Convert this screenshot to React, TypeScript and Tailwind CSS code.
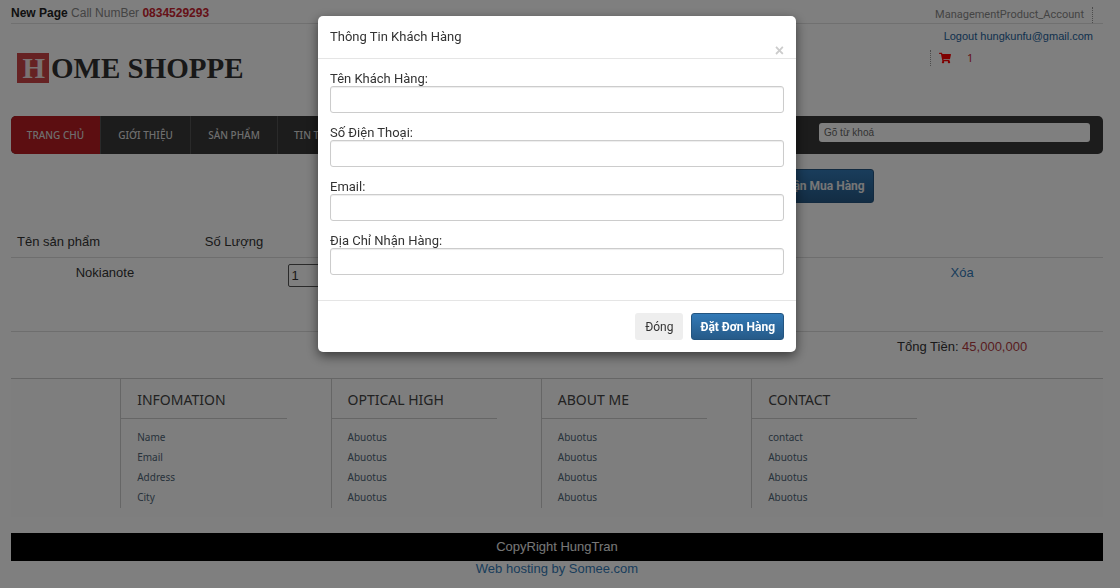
import { FaShoppingCart } from "react-icons/fa";

const navItems = [
  { label: "TRANG CHỦ", className: "w-[89px] bg-[#b81d22]" },
  { label: "GIỚI THIỆU", className: "w-[89px]" },
  { label: "SẢN PHẨM", className: "w-[86px]" },
  { label: "TIN TỨC", className: "px-4" },
];

const footerColumns = [
  { title: "INFOMATION", links: ["Name", "Email", "Address", "City"] },
  { title: "OPTICAL HIGH", links: ["Abuotus", "Abuotus", "Abuotus", "Abuotus"] },
  { title: "ABOUT ME", links: ["Abuotus", "Abuotus", "Abuotus", "Abuotus"] },
  { title: "CONTACT", links: ["contact", "Abuotus", "Abuotus", "Abuotus"] },
];

const fields = [
  { id: "name", label: "Tên Khách Hàng:", type: "text" },
  { id: "phone", label: "Số Điện Thoại:", type: "tel" },
  { id: "email", label: "Email:", type: "email" },
  { id: "address", label: "Địa Chỉ Nhận Hàng:", type: "text" },
];

function TopBar() {
  return (
    <div className="flex h-6 items-start justify-between border-b border-[#e0e0e0]">
      <p className="pt-1 text-[12px] leading-[18px] text-[#888]">
        <span className="font-bold text-[#222]">New Page</span> Call NumBer{" "}
        <span className="font-bold text-[#cb2431]">0834529293</span>
      </p>
      <a
        href="#account"
        className="mt-[7px] mr-[10px] border-r border-dotted border-[#999] pr-2 font-[Roboto,sans-serif] text-[11px] leading-4 text-[#888]"
      >
        ManagementProduct_Account
      </a>
    </div>
  );
}

function Header() {
  return (
    <header className="flex h-[92px] items-start justify-between">
      <a
        href="#home"
        className="mt-[29px] ml-[6px] flex items-center font-['Liberation_Serif',serif] text-[29px] leading-[30px] font-bold text-[#303030]"
      >
        <span className="mr-[2px] flex h-[30px] w-8 items-center justify-end bg-[#cc4447] pr-1 text-[#f4e4e4]">
          H
        </span>
        OME SHOPPE
      </a>
      <div className="mr-[10px] flex w-[163px] flex-col pt-1">
        <a href="#logout" className="self-end text-[11px] leading-4 whitespace-nowrap text-[#23629c]">
          Logout hungkunfu@gmail.com
        </a>
        <a
          href="#cart"
          className="mt-[6px] flex h-4 items-center gap-4 border-l border-dotted border-[#999] pl-2 font-['Noto_Sans',sans-serif] text-[11px] text-[#cb2431]"
        >
          <FaShoppingCart className="size-3 text-[#ff0000]" />
          <span>1</span>
        </a>
      </div>
    </header>
  );
}

function Nav() {
  return (
    <nav className="flex h-[38px] items-stretch overflow-hidden rounded-[5px] bg-[#383838] font-['Noto_Sans',sans-serif] text-[10px] font-medium text-[#ddd]">
      <ul className="flex">
        {navItems.map((item, i) => (
          <li key={item.label} className="flex border-r border-[#555]">
            <a href={"#nav" + i} className={"flex items-center justify-center " + item.className}>
              {item.label}
            </a>
          </li>
        ))}
      </ul>
      <input
        type="search"
        aria-label="Gõ từ khoá"
        placeholder="Gõ từ khoá"
        className="mt-[7px] mr-[13px] ml-auto h-[19px] w-[271px] rounded-[3px] bg-white px-[5px] font-['Liberation_Sans',sans-serif] text-[10px] font-normal text-[#333] placeholder:text-[#666]"
      />
    </nav>
  );
}

function Cart() {
  return (
    <main className="text-[13px] leading-[18px] text-[#333]">
      <div className="flex justify-end pt-[15px] pr-[21%] pb-[21px]">
        <button
          type="button"
          className="h-[34px] rounded-[3px] border border-[#245580] bg-gradient-to-b from-[#337ab7] to-[#265a88] px-2 font-[Roboto,sans-serif] text-[12px] font-bold text-[#eee]"
        >
          Xác Nhận Mua Hàng
        </button>
      </div>
      <table className="w-full table-fixed border-collapse">
        <colgroup>
          <col className="w-[17.2%]" />
          <col className="w-[32%]" />
          <col className="w-[25%]" />
          <col className="w-[25.8%]" />
        </colgroup>
        <thead>
          <tr className="h-[33px] border-b border-[#ddd] align-bottom">
            <th className="px-[6px] pb-[6px] text-left font-normal">Tên sản phẩm</th>
            <th className="px-[6px] pb-[6px] text-left font-normal">Số Lượng</th>
            <th className="px-[6px] pb-[6px] text-left font-normal">Giá</th>
            <th></th>
          </tr>
        </thead>
        <tbody className="text-center">
          <tr className="h-[74px] border-b border-[#ddd] align-top">
            <td className="pt-[6px]">Nokianote</td>
            <td className="pt-[6px]">
              <input
                type="text"
                aria-label="Số lượng"
                defaultValue="1"
                className="h-[23px] w-[172px] rounded-[2px] border border-[#555] bg-white px-[3px] text-left"
              />
            </td>
            <td className="pt-[6px]">45,000,000</td>
            <td className="pt-[6px]">
              <a href="#delete" className="text-[#337ab7]">Xóa</a>
            </td>
          </tr>
          <tr className="h-[47px] align-top">
            <td colSpan={3}></td>
            <td className="pt-[6px]">
              Tổng Tiền: <span className="text-[#b23b41]">45,000,000</span>
            </td>
          </tr>
        </tbody>
      </table>
    </main>
  );
}

function Footer() {
  return (
    <footer>
      <div className="flex border-t border-[#ccc] bg-[#fcfcfc] pb-[9px] pl-[10%] font-['Noto_Sans',sans-serif]">
        {footerColumns.map((col) => (
          <section key={col.title} className="h-[129px] w-[21.4%] border-l border-[#ccc]">
            <h2 className="h-10 w-[79%] border-b border-[#ccc] pl-4 text-[14px] leading-[41px] text-[#444]">
              {col.title}
            </h2>
            <ul className="pt-2 pl-4">
              {col.links.map((link, i) => (
                <li key={i} className="text-[10px] leading-5 text-[#4f6577]">
                  <a href="#info">{link}</a>
                </li>
              ))}
            </ul>
          </section>
        ))}
      </div>
      <p className="mt-4 bg-black text-center text-[13px] leading-7 text-[#eee]">CopyRight HungTran</p>
      <p className="text-center text-[13px] leading-4 text-[#337ab7]">
        <a href="#somee">Web hosting by Somee.com</a>
      </p>
    </footer>
  );
}

function OrderDialog() {
  return (
    <div className="fixed inset-0 flex items-start justify-center bg-black/50 pt-4 pr-[6px]">
      <form
        role="dialog"
        aria-modal="true"
        aria-labelledby="dialog-title"
        className="w-full max-w-[478px] rounded-[5px] bg-white font-[Roboto,sans-serif] text-[13px] text-[#333] shadow-[0_4px_12px_rgba(0,0,0,0.55)]"
      >
        <div className="flex h-[43px] justify-between border-b border-[#e5e5e5] px-3">
          <h1 id="dialog-title" className="pt-3 leading-[18px]">
            Thông Tin Khách Hàng
          </h1>
          <button
            type="button"
            aria-label="Close"
            className="self-end font-['Liberation_Sans',sans-serif] text-[16px] leading-[14px] font-bold text-[#ccc]"
          >
            ×
          </button>
        </div>
        <div className="flex flex-col gap-[13px] px-3 pt-[13px] pb-[25px]">
          {fields.map((f) => (
            <div key={f.id} className="flex flex-col">
              <label htmlFor={f.id} className="leading-[14px]">
                {f.label}
              </label>
              <input
                id={f.id}
                type={f.type}
                className="h-[27px] w-full rounded-[3px] border border-[#ccc] px-2 shadow-[inset_0_1px_1px_rgba(0,0,0,0.075)]"
              />
            </div>
          ))}
        </div>
        <div className="flex justify-end gap-2 border-t border-[#e5e5e5] p-3 text-[12px]">
          <button type="button" className="h-[27px] rounded-[3px] bg-[#eee] px-[10px]">
            Đóng
          </button>
          <button
            type="submit"
            className="h-[27px] rounded-[3px] border border-[#245580] bg-gradient-to-b from-[#337ab7] to-[#265a88] px-2 font-bold text-white"
          >
            Đặt Đơn Hàng
          </button>
        </div>
      </form>
    </div>
  );
}

export default function App() {
  return (
    <div className="min-h-screen bg-white pr-[17px] pl-[11px] font-['Liberation_Sans',Arial,sans-serif]">
      <TopBar />
      <Header />
      <Nav />
      <Cart />
      <Footer />
      <OrderDialog />
    </div>
  );
}
